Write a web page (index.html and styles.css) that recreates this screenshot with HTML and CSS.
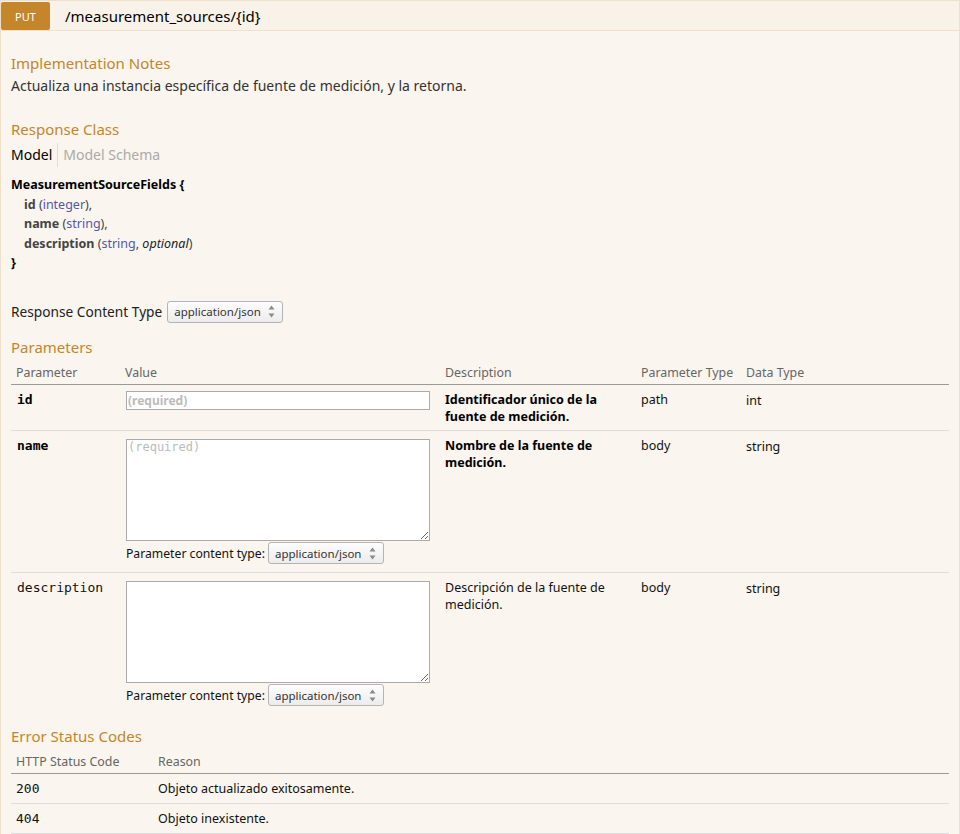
FILE: index.html
```html
<!DOCTYPE html>
<html lang="es">
<head>
<meta charset="utf-8">
<title>PUT /measurement_sources/{id}</title>
<link rel="stylesheet" href="styles.css">
</head>
<body>
<div class="operation">
  <div class="heading">
    <span class="method">PUT</span>
    <span class="path">/measurement_sources/{id}</span>
  </div>
  <div class="content">
    <h4>Implementation Notes</h4>
    <p class="notes">Actualiza una instancia específica de fuente de medición, y la retorna.</p>

    <h4>Response Class</h4>
    <div class="tabs">
      <span class="tab active">Model</span>
      <span class="tab">Model Schema</span>
    </div>
    <div class="model">
      <div><span class="strong">MeasurementSourceFields {</span></div>
      <div class="prop"><span class="prop-name">id</span> (<span class="prop-type">integer</span>),</div>
      <div class="prop"><span class="prop-name">name</span> (<span class="prop-type">string</span>),</div>
      <div class="prop"><span class="prop-name">description</span> (<span class="prop-type">string</span>, <span class="opt">optional</span>)</div>
      <div><span class="strong">}</span></div>
    </div>

    <div class="rct">
      <span class="rct-label">Response Content Type</span>
      <span class="select">application/json
        <svg class="arrows" width="7" height="13" viewBox="0 0 7 13"><path d="M3.5 0.5 L6.5 4.5 L0.5 4.5 Z" fill="#8a8a8a"/><path d="M0.5 8.5 L6.5 8.5 L3.5 12.5 Z" fill="#8a8a8a"/></svg>
      </span>
    </div>

    <h4>Parameters</h4>
    <table class="params">
      <thead>
        <tr>
          <th class="c-param">Parameter</th>
          <th class="c-value">Value</th>
          <th class="c-desc">Description</th>
          <th class="c-ptype">Parameter Type</th>
          <th class="c-dtype">Data Type</th>
        </tr>
      </thead>
      <tbody>
        <tr>
          <td class="code required">id</td>
          <td><input class="param-input" type="text" placeholder="(required)"></td>
          <td class="strong-desc">Identificador único de la fuente de medición.</td>
          <td>path</td>
          <td class="dtype">int</td>
        </tr>
        <tr>
          <td class="code required">name</td>
          <td>
            <textarea class="body-textarea" placeholder="(required)"></textarea>
            <div class="pct"><span>Parameter content type:</span>
              <span class="select">application/json
                <svg class="arrows" width="7" height="13" viewBox="0 0 7 13"><path d="M3.5 0.5 L6.5 4.5 L0.5 4.5 Z" fill="#8a8a8a"/><path d="M0.5 8.5 L6.5 8.5 L3.5 12.5 Z" fill="#8a8a8a"/></svg>
              </span>
            </div>
          </td>
          <td class="strong-desc">Nombre de la fuente de medición.</td>
          <td>body</td>
          <td class="dtype">string</td>
        </tr>
        <tr class="last">
          <td class="code">description</td>
          <td>
            <textarea class="body-textarea"></textarea>
            <div class="pct"><span>Parameter content type:</span>
              <span class="select">application/json
                <svg class="arrows" width="7" height="13" viewBox="0 0 7 13"><path d="M3.5 0.5 L6.5 4.5 L0.5 4.5 Z" fill="#8a8a8a"/><path d="M0.5 8.5 L6.5 8.5 L3.5 12.5 Z" fill="#8a8a8a"/></svg>
              </span>
            </div>
          </td>
          <td>Descripción de la fuente de medición.</td>
          <td>body</td>
          <td class="dtype">string</td>
        </tr>
      </tbody>
    </table>

    <h4>Error Status Codes</h4>
    <table class="errors">
      <thead>
        <tr>
          <th class="c-code">HTTP Status Code</th>
          <th>Reason</th>
        </tr>
      </thead>
      <tbody>
        <tr><td class="code">200</td><td>Objeto actualizado exitosamente.</td></tr>
        <tr><td class="code">404</td><td>Objeto inexistente.</td></tr>
      </tbody>
    </table>
  </div>
</div>
</body>
</html>
```

FILE: styles.css
```css
html, body {
  margin: 0;
  padding: 0;
  background: #ffffff;
}

body {
  font-family: "Noto Sans", "Open Sans", "DejaVu Sans", sans-serif;
  font-size: 13px;
  color: #333333;
}

.operation {
  width: 960px;
}

.heading {
  display: flex;
  align-items: center;
  height: 29px;
  background: #f9f2e9;
  border: 1px solid #f0e0ca;
  box-sizing: content-box;
}

.method {
  width: 49px;
  height: 28px;
  margin-top: 1px;
  display: flex;
  align-items: center;
  justify-content: center;
  background: #c5862b;
  color: #ffffff;
  font-size: 11px;
  border-radius: 2px;
}

.path {
  margin-left: 15px;
  font-size: 15px;
  color: #000000;
}

.content {
  background: #faf5ee;
  border: 1px solid #f0e0ca;
  border-top: none;
  padding: 10px 10px 0 10px;
}

h4 {
  margin: 0;
  padding: 12px 0 4px 0;
  font-size: 15px;
  line-height: 20px;
  font-weight: normal;
  color: #c5862b;
}

.notes {
  margin: 0 0 12px 0;
  font-size: 14px;
  line-height: 18px;
}

.tabs {
  display: flex;
  height: 24px;
  line-height: 24px;
  font-size: 14px;
}

.tab {
  color: #aaaaaa;
}

.tab.active {
  color: #000000;
  padding-right: 5px;
  margin-right: 5px;
  border-right: 1px solid #dddddd;
}

.model {
  padding-top: 8px;
  font-size: 12.5px;
  line-height: 19.5px;
  color: #444444;
}

.strong {
  font-weight: bold;
  color: #000000;
}

.prop {
  padding-left: 13px;
}

.prop-name {
  font-weight: bold;
}

.prop-type {
  color: #5555aa;
}

.opt {
  font-style: italic;
  color: #222222;
}

.rct {
  display: flex;
  align-items: center;
  gap: 5px;
  height: 22px;
  margin: 28px 0 2px 0;
  font-size: 13.7px;
  color: #222222;
}

.select {
  display: inline-flex;
  align-items: center;
  justify-content: space-between;
  box-sizing: border-box;
  width: 116px;
  height: 22px;
  padding: 0 7px 0 6px;
  border: 1px solid #b4b4b4;
  border-radius: 3px;
  background: linear-gradient(#fdfdfd, #ececec);
  font-size: 11.5px;
  color: #333333;
}

.arrows {
  display: block;
}

table {
  width: 938px;
  border-collapse: collapse;
  table-layout: fixed;
}

th {
  text-align: left;
  font-weight: normal;
  font-size: 12.4px;
  line-height: 17px;
  color: #666666;
  padding: 3px 5px 3px 5px;
  border-bottom: 1px solid #999999;
}

td {
  vertical-align: top;
  font-size: 12.5px;
  line-height: 17px;
  padding: 6px 5px 5px 5px;
  border-bottom: 1px solid #dddddd;
  color: #111111;
}

tr.last td {
  border-bottom: none;
}

.c-param { width: 99px; }
.c-value { width: 310px; }
.c-desc { width: 186px; }
.c-ptype { width: 95px; }

.code {
  font-family: "DejaVu Sans Mono", monospace;
  font-size: 13px;
  padding-left: 6px;
}

.code.required {
  font-weight: bold;
  color: #000000;
}

.strong-desc {
  font-weight: bold;
  color: #000000;
}

.dtype {
  padding-top: 7px;
}

.param-input {
  display: block;
  box-sizing: border-box;
  width: 304px;
  height: 19px;
  margin: 0 0 0 1px;
  padding: 0 1px;
  border: 1px solid #aaaaaa;
  background: #ffffff;
  font-family: "Noto Sans", "Open Sans", sans-serif;
  font-size: 12px;
  font-weight: bold;
}

.param-input::placeholder {
  color: #bbbbbb;
}

.body-textarea {
  display: block;
  box-sizing: border-box;
  width: 304px;
  height: 102px;
  margin: 2px 0 0 1px;
  padding: 0 1px;
  border: 1px solid #aaaaaa;
  background: #ffffff;
  font-family: "DejaVu Sans Mono", monospace;
  font-size: 12px;
  resize: both;
}

.body-textarea::placeholder {
  color: #bbbbbb;
}

.pct {
  display: flex;
  align-items: center;
  gap: 3px;
  height: 21px;
  margin: 2px 0 3px 1px;
  font-size: 12.2px;
  color: #111111;
}

.c-code { width: 132px; }

.errors td {
  padding: 6px 5px 6px 5px;
}
```
